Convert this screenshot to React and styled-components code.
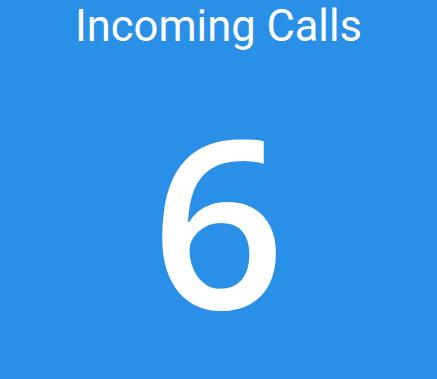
import React from "react";
import styled, { createGlobalStyle } from "styled-components";

const Global = createGlobalStyle`
  html, body { margin: 0; padding: 0; }
  body { background: #2a90e7; }
`;

const Panel = styled.div`
  width: 437px;
  height: 379px;
  background: #2a90e7;
  color: #ffffff;
  display: flex;
  flex-direction: column;
  align-items: center;
  overflow: hidden;
`;

const Title = styled.div`
  font-family: Roboto, "Liberation Sans", sans-serif;
  font-size: 43.5px;
  line-height: 54px;
`;

const Value = styled.div`
  font-family: "Open Sans", "Liberation Sans", sans-serif;
  font-size: 234px;
  font-weight: 600;
  line-height: 1;
  margin-top: 48px;
`;

export default function App() {
  return (
    <>
      <Global />
      <Panel>
        <Title>Incoming Calls</Title>
        <Value>6</Value>
      </Panel>
    </>
  );
}
